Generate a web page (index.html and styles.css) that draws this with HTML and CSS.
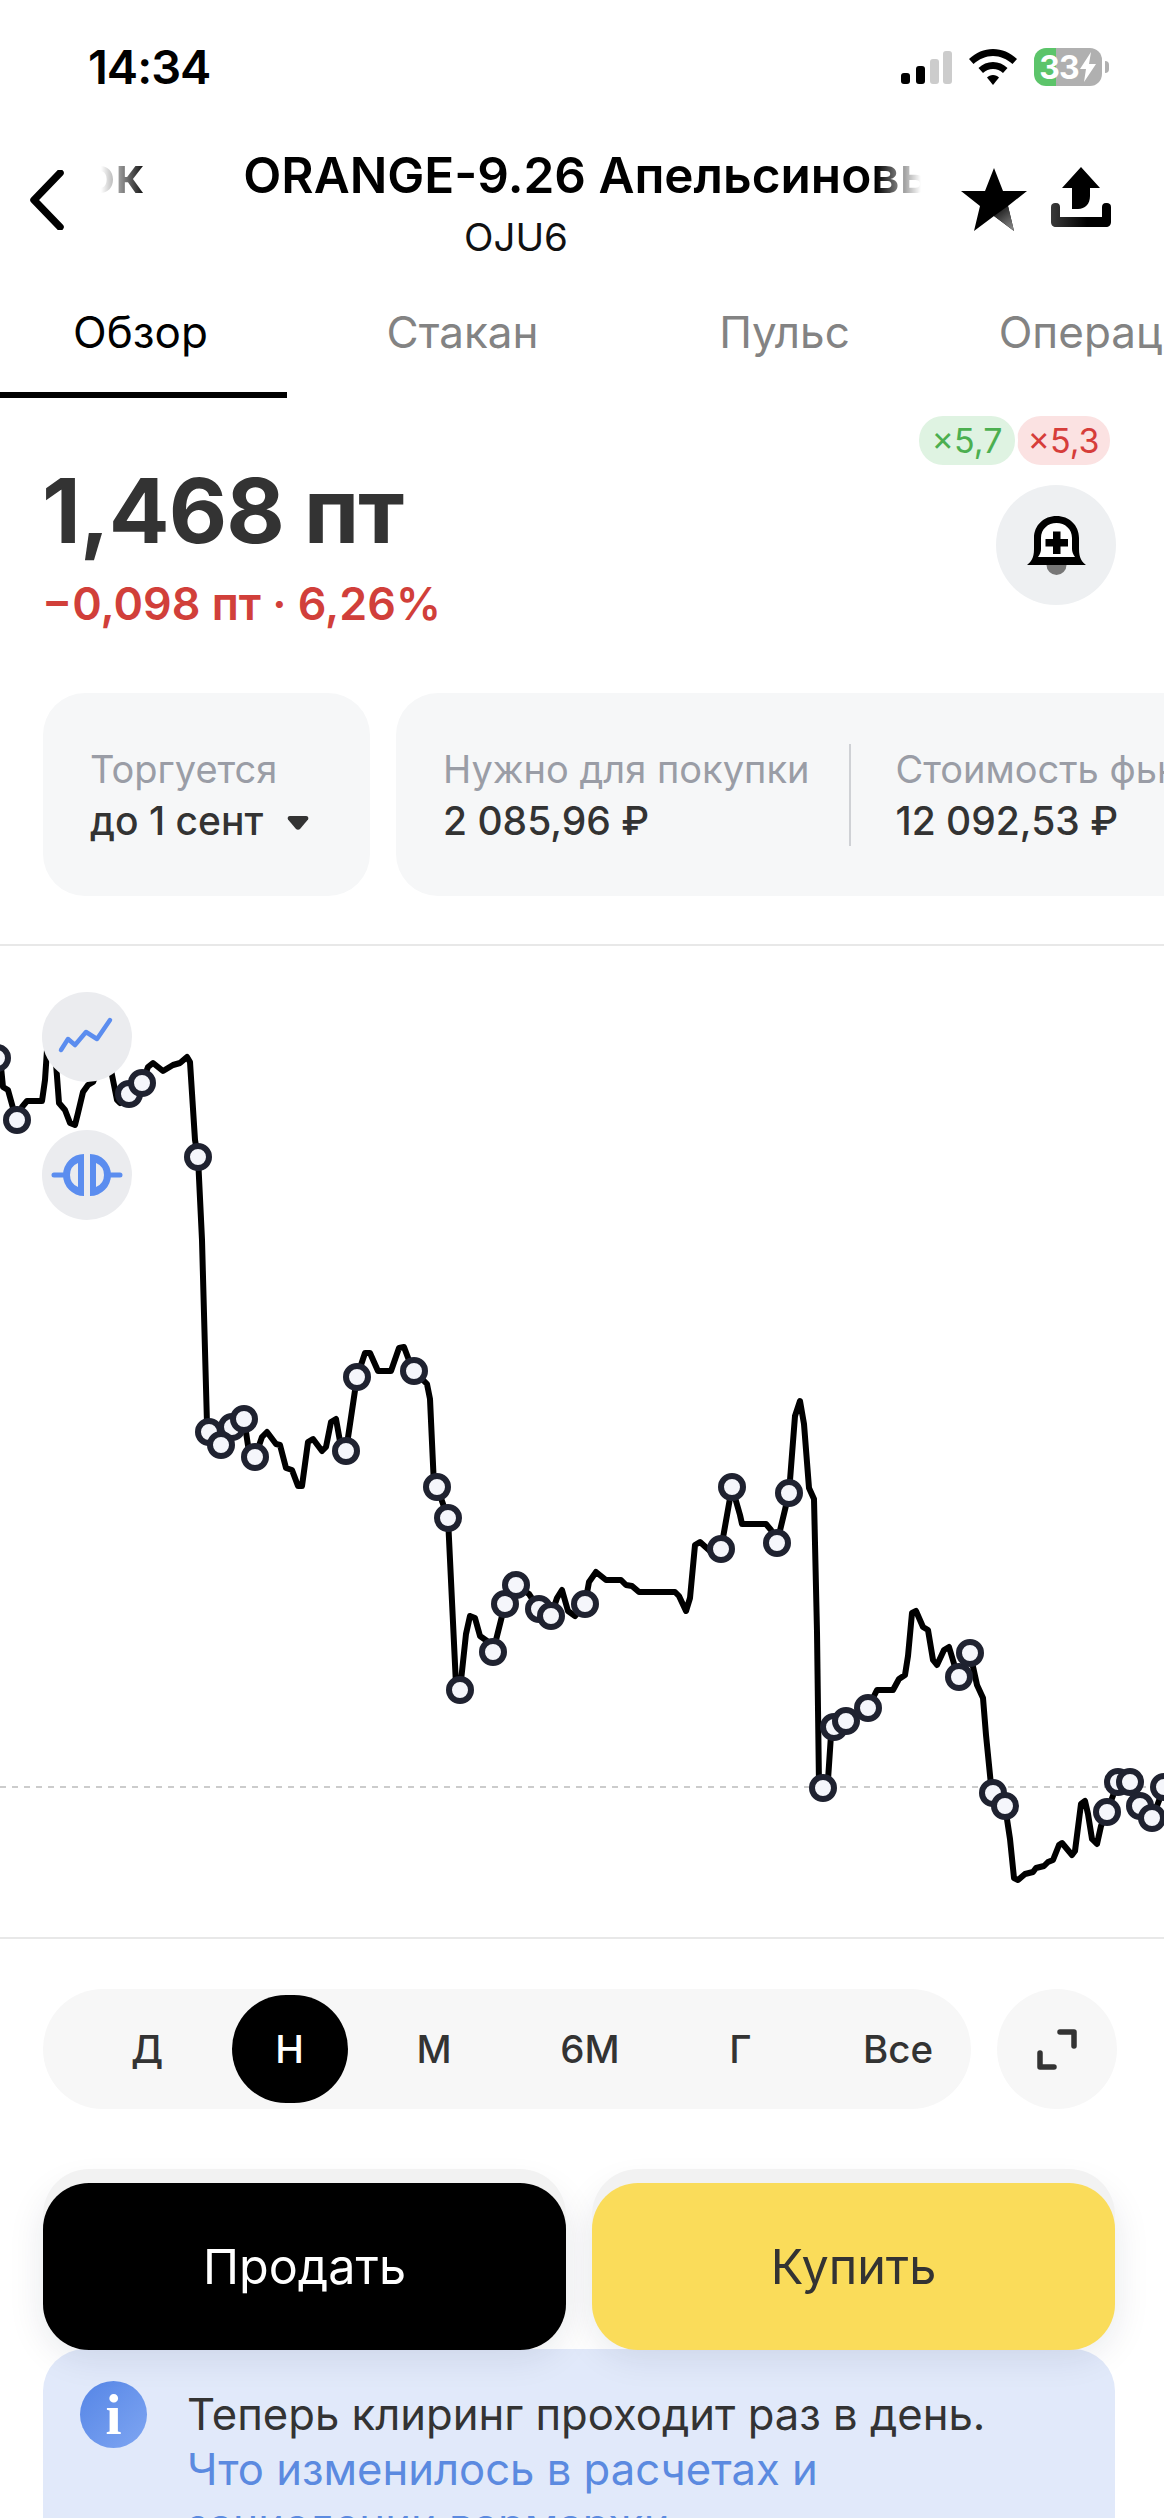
FILE: index.html
```html
<!DOCTYPE html>
<html lang="ru">
<head>
    <meta charset="UTF-8">
    <meta name="viewport" content="width=device-width, initial-scale=1.0">
    <title>ORANGE-9.26</title>
    <link rel="stylesheet" href="styles.css">
</head>
<body>

    <header class="status">
        <span class="clock">14:34</span>
        <div class="status-icons">
            <svg class="signal" width="51" height="33" viewBox="0 0 51 33">
                <rect x="0" y="22" width="9" height="11" rx="3" fill="#000"/>
                <rect x="15" y="15" width="9" height="18" rx="3" fill="#000"/>
                <rect x="29" y="8" width="9" height="25" rx="3" fill="#ccc"/>
                <rect x="42" y="0" width="9" height="33" rx="3" fill="#ccc"/>
            </svg>
            <svg class="wifi" width="48" height="36" viewBox="0 0 48 36">
                <path d="M24 0C15 0 7 3.5 0 10l4.500 5C10 10 17 7 24 7s14 3 19.500 8L48 10C41 3.500 33 0 24 0z"/>
                <path d="M24 13c-5.500 0-10.500 2-14.500 6l4.500 5c3-2.500 6-4 10-4s7 1.500 10 4l4.500-5c-4-4-9-6-14.500-6z"/>
                <path d="M24 26c-2.500 0-4.500 1-6 2.500l6 7.500 6-7.500c-1.500-1.500-3.500-2.500-6-2.500z"/>
            </svg>
            <div class="battery">
                <span>33</span>
                <svg width="18" height="30" viewBox="0 0 18 30"><path d="M12 0L1 17h6l-2 13 12-18h-7z" fill="#fff"/></svg>
            </div>
            <i class="battery-nub"></i>
        </div>
    </header>

    <nav class="nav">
        <svg class="back" width="34" height="60" viewBox="0 0 34 60">
            <path d="M30 3L4 30l26 27" fill="none" stroke="#000" stroke-width="7.500" stroke-linecap="round" stroke-linejoin="round"/>
        </svg>
        <div class="nav-title">
            <div class="marquee">
                <span class="marquee-tail">ок</span>
                <span>ORANGE-9.26 Апельсиновый сок</span>
            </div>
            <div class="ticker">OJU6</div>
        </div>
        <svg class="star" width="66" height="63" viewBox="0 0 66 63">
            <defs>
                <linearGradient id="leg" x1="0.2" y1="0" x2="0.8" y2="1">
                    <stop offset="0" stop-color="#111"/>
                    <stop offset="1" stop-color="#888"/>
                </linearGradient>
                <linearGradient id="tray" x1="0" y1="0" x2="1" y2="0">
                    <stop offset="0" stop-color="#3a3a3a"/>
                    <stop offset="0.6" stop-color="#000"/>
                </linearGradient>
            </defs>
            <path d="M33 0l9 23h24L47 38l6 25-20-15-20 15 6-25L0 23h24z" fill="#000"/>
            <path d="M33 48l14-10 6 25z" fill="url(#leg)"/>
        </svg>
        <svg class="share" width="60" height="60" viewBox="0 0 60 60">
            <path d="M30 0l19 21H39v8c0 8-5 13-12 13h-6V21H11z" fill="#000"/>
            <path d="M0 40c0-3 2-4 4-4h1c3 0 4 2 4 4v10h42V40c0-2 1-4 4-4h1c2 0 4 1 4 4v15c0 3-2 5-5 5H5c-3 0-5-2-5-5z" fill="url(#tray)"/>
        </svg>
    </nav>

    <div class="tabs">
        <div class="tab tab-active">Обзор</div>
        <div class="tab">Стакан</div>
        <div class="tab">Пульс</div>
        <div class="tab">Операции</div>
    </div>

    <section class="quote">
        <div class="quote-main">
            <div class="price">1,468 пт</div>
            <div class="change">−0,098 пт · 6,26%</div>
        </div>
        <div class="quote-side">
            <div class="leverage">
                <span class="lev lev-long">×5,7</span>
                <span class="lev lev-short">×5,3</span>
            </div>
            <div class="round round-bell">
                <svg width="59" height="59" viewBox="0 0 59 59">
                    <path d="M19.500 49a10 10 0 0 0 20 0z" fill="#777"/>
                    <path d="M0 49c4-3 7-7 7-16V22C7 9 17 0 29.500 0S52 9 52 22v11c0 9 3 13 7 16z" fill="#000"/>
                    <path d="M11 41c2-3 3-5 3-8V22c0-9 7-15 15.500-15S45 13 45 22v11c0 3 1 5 3 8z" fill="#fff"/>
                    <path d="M26 15.500h7.500V23H41v7.500h-7.500V38H26v-7.500h-7.500V23H26z" fill="#000"/>
                </svg>
            </div>
        </div>
    </section>

    <section class="cards">
        <div class="card card-trade">
            <div class="card-label">Торгуется</div>
            <div class="card-value">до 1 сент
                <svg class="caret" width="22" height="15" viewBox="0 0 22 15"><path d="M3 1h16c2 0 3 2 2 3.500L13 14c-1 1-3 1-4 0L1 4.500C0 3 1 1 3 1z" fill="#333"/></svg>
            </div>
        </div>
        <div class="card card-margin">
            <div class="card-item">
                <div class="card-label">Нужно для покупки</div>
                <div class="card-value">2 085,96 ₽</div>
            </div>
            <div class="card-item card-item-split">
                <div class="card-label">Стоимость фьючерса</div>
                <div class="card-value">12 092,53 ₽</div>
            </div>
        </div>
    </section>

    <section class="chart">
        <svg class="chart-plot" width="1164" height="993" viewBox="0 946 1164 993">
            <line class="chart-base" x1="0" y1="1787" x2="1164" y2="1787"/>
            <polyline class="chart-line" points="1,1067 3,1087 8,1090 13,1108 17,1120 22,1107 27,1101 42,1101 45,1080 47,1050 50,1040 55,1050 59,1103 65,1110 70,1123 75,1125 78,1113 83,1092 88,1085 93,1082 100,1065 110,1065 117,1100 120,1103 129,1094 142,1083 148,1067 153,1063 163,1071 173,1065 180,1063 187,1057 190,1062 195,1140 198,1157 202,1240 207,1424 209,1432 221,1445 232,1427 244,1419 249,1452 255,1457 262,1437 267,1432 276,1444 280,1445 286,1468 292,1470 298,1486 302,1486 308,1442 313,1439 322,1451 326,1447 331,1422 336,1419 341,1447 346,1451 357,1377 365,1353 370,1353 378,1371 391,1371 399,1348 404,1347 410,1363 414,1371 427,1384 430,1399 434,1486 437,1487 448,1518 456,1685 460,1690 466,1634 470,1616 475,1618 480,1636 487,1641 493,1652 505,1604 516,1585 529,1594 539,1609 551,1616 557,1598 562,1590 568,1611 575,1616 585,1604 589,1582 596,1572 606,1580 621,1580 626,1585 632,1586 639,1592 675,1592 679,1596 686,1611 690,1598 695,1545 700,1542 710,1551 721,1549 732,1487 740,1515 742,1524 766,1524 771,1530 777,1543 789,1493 795,1416 800,1401 804,1424 809,1488 814,1499 817,1632 819,1785 823,1788 828,1780 831,1735 834,1727 846,1721 868,1708 877,1690 893,1690 899,1679 905,1675 908,1656 912,1613 916,1611 923,1627 928,1630 933,1660 937,1665 944,1650 949,1647 955,1667 959,1677 970,1653 977,1685 983,1698 986,1735 991,1785 993,1793 1005,1806 1010,1839 1014,1878 1018,1880 1025,1874 1033,1872 1036,1868 1044,1866 1048,1862 1053,1860 1059,1845 1062,1843 1072,1855 1075,1851 1081,1804 1085,1801 1088,1814 1092,1839 1097,1844 1101,1826 1107,1812 1118,1782 1130,1782 1140,1806 1152,1818 1157,1806 1164,1787"/>
            <g class="chart-marks">
                <circle cx="-3" cy="1058" r="11"/>
                <circle cx="17" cy="1120" r="11"/>
                <circle cx="129" cy="1094" r="11"/>
                <circle cx="142" cy="1083" r="11"/>
                <circle cx="198" cy="1157" r="11"/>
                <circle cx="209" cy="1432" r="11"/>
                <circle cx="232" cy="1427" r="11"/>
                <circle cx="221" cy="1445" r="11"/>
                <circle cx="244" cy="1419" r="11"/>
                <circle cx="255" cy="1457" r="11"/>
                <circle cx="346" cy="1451" r="11"/>
                <circle cx="357" cy="1377" r="11"/>
                <circle cx="414" cy="1371" r="11"/>
                <circle cx="437" cy="1487" r="11"/>
                <circle cx="448" cy="1518" r="11"/>
                <circle cx="460" cy="1690" r="11"/>
                <circle cx="493" cy="1652" r="11"/>
                <circle cx="505" cy="1604" r="11"/>
                <circle cx="516" cy="1585" r="11"/>
                <circle cx="539" cy="1609" r="11"/>
                <circle cx="551" cy="1616" r="11"/>
                <circle cx="585" cy="1604" r="11"/>
                <circle cx="721" cy="1549" r="11"/>
                <circle cx="732" cy="1487" r="11"/>
                <circle cx="777" cy="1543" r="11"/>
                <circle cx="789" cy="1493" r="11"/>
                <circle cx="823" cy="1788" r="11"/>
                <circle cx="834" cy="1727" r="11"/>
                <circle cx="846" cy="1721" r="11"/>
                <circle cx="868" cy="1708" r="11"/>
                <circle cx="959" cy="1677" r="11"/>
                <circle cx="970" cy="1653" r="11"/>
                <circle cx="993" cy="1793" r="11"/>
                <circle cx="1005" cy="1806" r="11"/>
                <circle cx="1107" cy="1812" r="11"/>
                <circle cx="1118" cy="1782" r="11"/>
                <circle cx="1130" cy="1782" r="11"/>
                <circle cx="1140" cy="1806" r="11"/>
                <circle cx="1152" cy="1818" r="11"/>
                <circle cx="1164" cy="1787" r="11"/>
            </g>
        </svg>

        <div class="chart-tool chart-tool-line">
            <svg width="90" height="90" viewBox="0 0 90 90">
                <polyline points="19,58 26,47 33,53 44,40 55,47 68,28" fill="none" stroke="#5b8def" stroke-width="4.500" stroke-linecap="round" stroke-linejoin="round"/>
            </svg>
        </div>
        <div class="chart-tool chart-tool-split">
            <svg width="90" height="90" viewBox="0 0 90 90">
                <path d="M42 24a21 21 0 0 0 0 42zM36 33a13 13 0 0 0 0 24zM48 24a21 21 0 0 1 0 42zM54 33a13 13 0 0 1 0 24z" fill="#5b8def" fill-rule="evenodd"/>
                <path d="M12 45h13M65 45h13" stroke="#5b8def" stroke-width="5" stroke-linecap="round"/>
            </svg>
        </div>
    </section>

    <section class="periods">
        <div class="period-bar">
            <span>Д</span>
            <span class="period-active"><b>Н</b></span>
            <span>М</span>
            <span>6М</span>
            <span>Г</span>
            <span class="period-last">Все</span>
        </div>
        <div class="round round-expand">
            <svg width="40" height="41" viewBox="0 0 40 41">
                <path d="M23 3h14v14M3 24v14h14" fill="none" stroke="#333" stroke-width="5.500" stroke-linecap="round" stroke-linejoin="round"/>
            </svg>
        </div>
    </section>

    <section class="actions">
        <div class="btn btn-sell">Продать</div>
        <div class="btn btn-buy">Купить</div>
    </section>

    <section class="info">
        <div class="info-icon">i</div>
        <p class="info-text">Теперь клиринг проходит раз в день.<br>
            <a class="info-link">Что изменилось в расчетах и<br>зачислении вармаржи</a></p>
    </section>

</body>
</html>
```

FILE: styles.css
```css
* {
    box-sizing: border-box;
}

body {
    margin: 0;
    width: 1164px;
    height: 2518px;
    overflow: hidden;
    background: #fff;
    color: #333;
    font-family: Inter, "Noto Sans", sans-serif;
}

svg {
    display: block;
    flex-shrink: 0;
}

/* status bar */
.status {
    height: 134px;
    padding: 0 55px 0 88px;
    display: flex;
    align-items: center;
    justify-content: space-between;
}

.clock {
    margin-top: -2px;
    color: #000;
    font-size: 47px;
    font-weight: 600;
    letter-spacing: -1px;
}

.status-icons {
    display: flex;
    align-items: center;
}

.wifi {
    margin-left: 17px;
    margin-right: 17px;
}

.battery {
    width: 68px;
    height: 38px;
    border-radius: 12px;
    background: linear-gradient(90deg, #5cc46a 32%, #b0b0b0 32%);
    display: flex;
    align-items: center;
    justify-content: center;
    color: #fff;
    font-size: 32px;
    font-weight: 700;
    letter-spacing: -1px;
}

.battery-nub {
    width: 4px;
    height: 12px;
    margin-left: 3px;
    background: #b0b0b0;
    border-radius: 0 4px 4px 0;
}

/* header */
.nav {
    height: 126px;
    padding-left: 30px;
    display: flex;
    align-items: flex-start;
}

.back {
    margin-top: 36px;
}

.nav-title {
    width: 820px;
    margin-left: 37px;
    overflow: hidden;
}

.marquee {
    display: flex;
    margin-top: 13px;
    height: 56px;
    line-height: 56px;
    font-size: 49.500px;
    font-weight: 600;
    color: #000;
    white-space: nowrap;
    -webkit-mask-image: linear-gradient(90deg, transparent 0, #000 46px, #000 775px, transparent 820px);
    mask-image: linear-gradient(90deg, transparent 0, #000 46px, #000 775px, transparent 820px);
}

.marquee-tail {
    margin-left: -16px;
    margin-right: 100px;
}

.ticker {
    margin-top: 12px;
    text-align: center;
    padding-left: 10px;
    font-size: 38.500px;
    line-height: 44px;
    color: #111;
}

.star {
    margin-left: 40px;
    margin-top: 34px;
}

.share {
    margin-left: 24px;
    margin-top: 33px;
}

/* tabs */
.tabs {
    display: flex;
    gap: 35px;
    height: 138px;
    overflow: hidden;
}

.tab {
    flex: 0 0 287px;
    padding-top: 44px;
    padding-right: 6px;
    text-align: center;
    font-size: 44px;
    line-height: 56px;
    color: #838383;
    white-space: nowrap;
}

.tab-active {
    color: #000;
    border-bottom: 6px solid #000;
}

/* price block */
.quote {
    height: 295px;
    padding: 18px 48px 0 42px;
    display: flex;
    justify-content: space-between;
}

.quote-main {
    margin-top: 45px;
}

.price {
    font-size: 90px;
    line-height: 100px;
    font-weight: 700;
    letter-spacing: -1px;
    color: #333;
}

.change {
    margin-top: 18px;
    font-size: 44.800px;
    line-height: 50px;
    font-weight: 600;
    color: #d13f3a;
}

.quote-side {
    display: flex;
    flex-direction: column;
    align-items: flex-end;
}

.leverage {
    display: flex;
    margin-right: 6px;
}

.lev {
    height: 49px;
    line-height: 49px;
    border-radius: 24px;
    font-size: 34px;
    text-align: center;
}

.lev-long {
    position: relative;
    width: 96px;
    background: #dff3e2;
    color: #4caf50;
    box-shadow: 0 0 0 3px #fff;
}

.lev-short {
    width: 93px;
    margin-left: 2px;
    background: #fbe2e2;
    color: #d63d3a;
}

.round {
    width: 120px;
    height: 120px;
    border-radius: 50%;
    display: flex;
    align-items: center;
    justify-content: center;
}

.round-bell {
    margin-top: 20px;
    background: #eef0f2;
}

/* info cards */
.cards {
    display: flex;
    gap: 26px;
    height: 203px;
    padding-left: 43px;
    overflow: hidden;
    white-space: nowrap;
}

.card {
    flex-shrink: 0;
    background: #f6f7f8;
    border-radius: 42px;
    display: flex;
    align-items: center;
    padding: 0 47px;
}

.card-label {
    font-size: 38px;
    line-height: 51px;
    color: #9a9da6;
}

.card-value {
    display: flex;
    align-items: center;
    font-size: 39px;
    line-height: 51px;
    font-weight: 500;
    color: #333;
}

.caret {
    margin-left: 24px;
    margin-top: 4px;
}

.card-trade {
    width: 327px;
    flex-direction: column;
    align-items: flex-start;
    justify-content: center;
}

.card-margin {
    width: 900px;
}

.card-item-split {
    margin-left: 40px;
    padding-left: 44px;
    border-left: 2px solid #cfd1d5;
}

/* chart */
.chart {
    position: relative;
    margin-top: 48px;
    height: 995px;
    border-top: 2px solid #e8e8e8;
    border-bottom: 2px solid #e8e8e8;
    overflow: hidden;
}

.chart-base {
    stroke: #ccc;
    stroke-width: 2;
    stroke-dasharray: 6 6;
}

.chart-line {
    fill: none;
    stroke: #000;
    stroke-width: 6;
    stroke-linejoin: round;
    stroke-linecap: round;
}

.chart-marks circle {
    fill: #f5f6fb;
    stroke: #1f2230;
    stroke-width: 6;
}

.chart-tool {
    position: absolute;
    left: 42px;
    width: 90px;
    height: 90px;
    border-radius: 50%;
    background: #ebecef;
}

.chart-tool-line {
    top: 46px;
}

.chart-tool-split {
    top: 184px;
}

/* period switch */
.periods {
    margin-top: 50px;
    padding-left: 43px;
    display: flex;
    gap: 26px;
}

.period-bar {
    width: 928px;
    height: 120px;
    padding-left: 33px;
    border-radius: 60px;
    background: #f7f7f7;
    display: grid;
    grid-template-columns: 142px 143px 146px 166px 135px 1fr;
    align-items: center;
    justify-items: center;
    font-size: 38.500px;
    font-weight: 500;
    color: #333;
}

.period-active {
    width: 116px;
    height: 108px;
    border-radius: 54px;
    background: #000;
    color: #fff;
    display: flex;
    align-items: center;
    justify-content: center;
}

.period-active b {
    font-weight: 500;
}

.period-last {
    justify-self: end;
    margin-right: 38px;
}

.round-expand {
    background: #f7f7f7;
}

/* buttons */
.actions {
    position: relative;
    z-index: 1;
    margin-top: 74px;
    padding-left: 43px;
    display: flex;
    gap: 26px;
}

.btn {
    width: 523px;
    height: 167px;
    border-radius: 46px;
    display: flex;
    align-items: center;
    justify-content: center;
    font-size: 48.500px;
    box-shadow: 0 -14px 0 0 #f2f2f2, 0 6px 36px rgba(20, 30, 60, 0.1);
}

.btn-sell {
    background: #000;
    color: #fff;
}

.btn-buy {
    background: #fadc5a;
    color: #333;
}

/* notice */
.info {
    margin: -1px 49px 0 43px;
    height: 320px;
    padding: 38px 0 0 37px;
    border-radius: 42px;
    background: #e1e9fa;
    display: flex;
    align-items: flex-start;
}

.info-icon {
    flex-shrink: 0;
    width: 67px;
    height: 67px;
    margin-top: -6px;
    border-radius: 50%;
    background: linear-gradient(135deg, #5585e6, #7fa6f2);
    color: #fff;
    text-align: center;
    font-family: "Liberation Serif", serif;
    font-size: 58px;
    font-weight: 700;
    line-height: 67px;
}

.info-text {
    margin: 0 0 0 40px;
    font-size: 43.600px;
    line-height: 55px;
    color: #333;
    white-space: nowrap;
}

.info-link {
    color: #5b8ae0;
}
```
